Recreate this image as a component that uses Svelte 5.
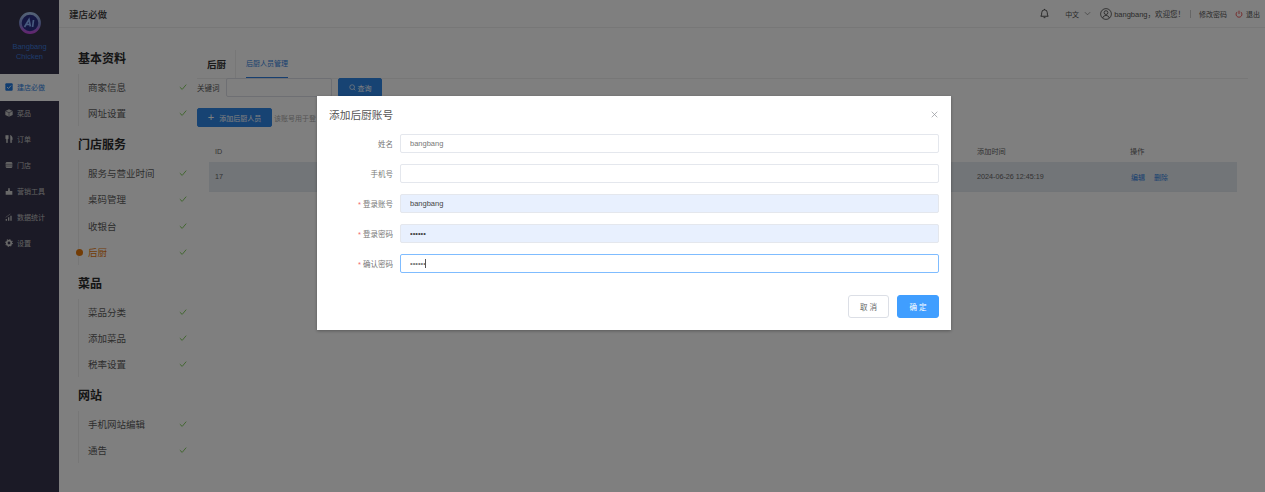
<script>
  const nav = [
    { label: '建店必做', icon: 'check', active: true },
    { label: '菜品', icon: 'dish' },
    { label: '订单', icon: 'fork' },
    { label: '门店', icon: 'store' },
    { label: '营销工具', icon: 'crown' },
    { label: '数据统计', icon: 'chart' },
    { label: '设置', icon: 'gear' }
  ];

  const groups = [
    { title: '基本资料', items: ['商家信息', '网址设置'] },
    { title: '门店服务', items: ['服务与营业时间', '桌码管理', '收银台', '后厨'] },
    { title: '菜品', items: ['菜品分类', '添加菜品', '税率设置'] },
    { title: '网站', items: ['手机网站编辑', '通告'] }
  ];

  const fields = [
    { label: '姓名', value: 'bangbang', type: 'text' },
    { label: '手机号', value: '', type: 'text' },
    { label: '登录账号', value: 'bangbang', type: 'text', required: true, filled: true },
    { label: '登录密码', value: '123456', type: 'password', required: true, filled: true },
    { label: '确认密码', value: '123456', type: 'password', required: true, focused: true }
  ];
</script>

<div class="page">
  <aside class="sidebar">
    <div class="brand">
      <svg class="logo" viewBox="0 0 22 22" width="22" height="22">
        <defs>
          <linearGradient id="ring" x1="0" y1="0" x2="0" y2="1">
            <stop offset="0" stop-color="#a9c4ee" />
            <stop offset="0.55" stop-color="#7f8fd8" />
            <stop offset="1" stop-color="#c24ee0" />
          </linearGradient>
        </defs>
        <circle cx="11" cy="11" r="9.6" fill="#2b2f86" stroke="url(#ring)" stroke-width="2.6" />
        <path d="M5.5 15 L10 7.5 L11.4 14.5 M7.5 12.5 H11 M14.5 8 L13.6 15" fill="none" stroke="#8fb4ff" stroke-width="1.7" />
      </svg>
      <div class="brand-name">Bangbang<br />Chicken</div>
    </div>
    {#each nav as item}
      <div class="nav-item" class:active={item.active}>
        <svg class="nav-icon" viewBox="0 0 12 12" width="8" height="8">
          {#if item.icon === 'check'}
            <rect x="0.5" y="0.5" width="11" height="11" rx="1.5" fill="#1f78e0" />
            <path d="M3 6 L5.2 8.2 L9.2 3.8" fill="none" stroke="#fff" stroke-width="1.3" />
          {:else if item.icon === 'dish'}
            <path d="M6 0.5 L11.5 3 V9 L6 11.5 L0.5 9 V3 Z" fill="#c6c6c6" />
            <path d="M0.5 3 L6 5.5 L11.5 3 M6 5.5 V11.5" fill="none" stroke="#36344c" stroke-width="0.8" />
          {:else if item.icon === 'fork'}
            <path d="M1 0.5 V5 Q1 6.5 2.2 6.5 V11.5 H3.8 V6.5 Q5 6.5 5 5 V0.5 M3 0.5 V5 M8 0.5 Q11.5 1.5 11 7 H10 V11.5 H8.4 Z" fill="#d0d0d0" stroke="#d0d0d0" stroke-width="0.6" />
          {:else if item.icon === 'store'}
            <rect x="1" y="1.5" width="10" height="9" rx="2" fill="#c6c6c6" />
            <path d="M1 5 H11 M1 7.6 H11" stroke="#36344c" stroke-width="0.7" />
          {:else if item.icon === 'crown'}
            <path d="M1 6 H4.5 L5.2 1.5 H6.8 L7.5 6 H11 V11.5 H1 Z" fill="#d0d0d0" />
          {:else if item.icon === 'chart'}
            <path d="M1 11.5 V9 H3 V11.5 Z M4.5 11.5 V6.5 H6.5 V11.5 Z M8 11.5 V4 H10 V11.5 Z" fill="#c6c6c6" />
            <path d="M1 6.5 L8 1.5" stroke="#c6c6c6" stroke-width="0.8" />
          {:else}
            <circle cx="6" cy="6" r="3.4" fill="none" stroke="#d0d0d0" stroke-width="2.6" />
            <circle cx="6" cy="6" r="5" fill="none" stroke="#d0d0d0" stroke-width="1.6" stroke-dasharray="1.8 2.1" />
          {/if}
        </svg>
        <span>{item.label}</span>
      </div>
    {/each}
  </aside>

  <div class="body">
    <header class="topbar">
      <div class="crumb">建店必做</div>
      <div class="top-right">
        <svg viewBox="0 0 12 12" width="11" height="11" class="bell">
          <path d="M2 9 Q3 8 3 5 Q3 2 6 2 Q9 2 9 5 Q9 8 10 9 Z M6 1 V2 M5 10.5 H7" fill="none" stroke="#333" stroke-width="0.9" />
        </svg>
        <span class="lang">中文</span>
        <svg viewBox="0 0 8 8" width="7" height="7" class="caret-down">
          <path d="M1 2.5 L4 5.5 L7 2.5" fill="none" stroke="#777" stroke-width="0.8" />
        </svg>
        <svg viewBox="0 0 12 12" width="12" height="12" class="user">
          <circle cx="6" cy="6" r="5.4" fill="none" stroke="#444" stroke-width="0.8" />
          <circle cx="6" cy="4.6" r="1.9" fill="none" stroke="#444" stroke-width="0.8" />
          <path d="M2.6 10 Q3.4 7.4 6 7.4 Q8.6 7.4 9.4 10" fill="none" stroke="#444" stroke-width="0.8" />
        </svg>
        <span class="welcome">bangbang，欢迎您！</span>
        <span class="sep"></span>
        <span class="pwd">修改密码</span>
        <svg viewBox="0 0 12 12" width="8" height="8" class="power">
          <path d="M3.5 2.8 A4.4 4.4 0 1 0 8.5 2.8 M6 1 V6" fill="none" stroke="#e63535" stroke-width="1.2" />
        </svg>
        <span class="quit">退出</span>
      </div>
    </header>

    <div class="content">
      <nav class="steps">
        {#each groups as group}
          <section class="group">
            <h3>{group.title}</h3>
            <ul>
              {#each group.items as item}
                <li class:current={item === '后厨'}>
                  <span>{item}</span>
                  <svg viewBox="0 0 10 10" width="8" height="8">
                    <path d="M1 5.2 L4 8 L9 2" fill="none" stroke="#67c23a" stroke-width="1" />
                  </svg>
                </li>
              {/each}
            </ul>
          </section>
        {/each}
      </nav>

      <main class="panel">
        <div class="tabs">
          <div class="tab-title">后厨</div>
          <div class="tab-active">后厨人员管理</div>
        </div>
        <div class="filter">
          <span class="filter-label">关键词</span>
          <div class="filter-input"></div>
          <button class="search">
            <svg viewBox="0 0 10 10" width="7" height="7">
              <circle cx="4.5" cy="4.5" r="3.4" fill="none" stroke="#fff" stroke-width="1" />
              <path d="M7 7 L9 9" stroke="#fff" stroke-width="1" />
            </svg>
            查询
          </button>
        </div>
        <div class="add-row">
          <button class="add"><span class="plus">+</span>添加后厨人员</button>
          <span class="hint">该账号用于登</span>
        </div>
        <div class="table">
          <div class="thead">
            <span class="id">ID</span>
            <span>添加时间</span>
            <span>操作</span>
          </div>
          <div class="trow">
            <span class="id">17</span>
            <span>2024-06-26 12:45:19</span>
            <span class="ops"><em>编辑</em><em>删除</em></span>
          </div>
        </div>
      </main>
    </div>
  </div>

  <div class="overlay">
    <div class="dialog">
      <div class="dialog-head">
        <span class="dialog-title">添加后厨账号</span>
        <svg viewBox="0 0 10 10" width="7" height="7">
          <path d="M1 1 L9 9 M9 1 L1 9" stroke="#909399" stroke-width="1" />
        </svg>
      </div>
      <form class="form">
        {#each fields as f}
          <div class="form-row">
            <label>
              {#if f.required}<i>*</i>{/if}{f.label}
            </label>
            <div class="field" class:filled={f.filled} class:focused={f.focused}>
              <input type={f.type} value={f.value} readonly />
              {#if f.focused}<span class="cursor"></span>{/if}
            </div>
          </div>
        {/each}
      </form>
      <div class="dialog-foot">
        <button class="cancel">取 消</button>
        <button class="ok">确 定</button>
      </div>
    </div>
  </div>
</div>

<style>
  :global(body) {
    margin: 0;
    background: #fff;
  }

  .page {
    position: relative;
    display: flex;
    height: 492px;
    overflow: hidden;
    font-family: "Liberation Sans", "Noto Sans CJK SC", sans-serif;
    color: #333;
  }

  .sidebar {
    width: 59px;
    flex: none;
    background: #36344c;
  }

  .brand {
    height: 74px;
    box-sizing: border-box;
    padding-top: 12px;
    text-align: center;
  }

  .logo {
    display: block;
    margin: 0 auto 8px;
  }

  .brand-name {
    font-size: 7.5px;
    line-height: 10px;
    color: #3d7ad8;
  }

  .nav-item {
    height: 26px;
    box-sizing: border-box;
    padding: 0 0 2px 5px;
    display: flex;
    align-items: center;
    gap: 4px;
    font-size: 7px;
    color: #c4c4c4;
  }

  .nav-item.active {
    height: 27px;
    padding-bottom: 1px;
    background: #fff;
    color: #2f7fe0;
  }

  .body {
    flex: 1;
    min-width: 0;
    display: flex;
    flex-direction: column;
  }

  .topbar {
    height: 27px;
    flex: none;
    display: flex;
    align-items: center;
    justify-content: space-between;
    padding: 0 5px 0 10px;
    border-bottom: 1px solid #eee;
  }

  .crumb {
    font-size: 9.5px;
    font-weight: 500;
    color: #333;
  }

  .top-right {
    display: flex;
    align-items: center;
    font-size: 7px;
    color: #555;
  }

  .lang {
    margin-left: 15px;
  }

  .caret-down {
    margin-left: 5px;
  }

  .user {
    margin-left: 9px;
  }

  .welcome {
    margin-left: 2px;
    font-size: 7.5px;
  }

  .sep {
    width: 1px;
    height: 8px;
    background: #ccc;
    margin: 0 8px 0 5px;
  }

  .power {
    margin-left: 8px;
  }

  .quit {
    margin-left: 3px;
  }

  .content {
    flex: 1;
    display: flex;
    padding-left: 19px;
  }

  .steps {
    width: 119px;
    flex: none;
    padding-top: 18px;
  }

  .group {
    margin-bottom: 6.3px;
  }

  h3 {
    margin: 0 0 4px;
    height: 24px;
    line-height: 27px;
    font-size: 12px;
    font-weight: 700;
    color: #2a2a2a;
  }

  ul {
    list-style: none;
    margin: 0;
    padding: 0;
    border-left: 1px solid #eee;
  }

  li {
    position: relative;
    height: 26.05px;
    display: flex;
    align-items: center;
    justify-content: space-between;
    padding: 0 3px 0 9px;
    font-size: 9.5px;
    color: #5c5c5c;
    width: 99px;
  }

  li.current {
    color: #e6780a;
  }

  li.current::before {
    content: "";
    position: absolute;
    left: -3px;
    top: 10px;
    width: 7px;
    height: 7px;
    border-radius: 50%;
    background: #e6780a;
  }

  .panel {
    flex: 1;
    min-width: 0;
    padding: 22px 17px 0 0;
  }

  .tabs {
    height: 28px;
    display: flex;
    border-bottom: 1px solid #eee;
  }

  .tab-title {
    width: 28px;
    padding-left: 10px;
    line-height: 29px;
    font-size: 9.5px;
    font-weight: 700;
    color: #333;
    border-right: 1px solid #eee;
  }

  .tab-active {
    margin-left: 10px;
    height: 27px;
    line-height: 28px;
    font-size: 7px;
    color: #2f7fe0;
    border-bottom: 1px solid #2f7fe0;
  }

  .filter {
    display: flex;
    align-items: center;
    height: 19px;
    margin-top: -1px;
  }

  .filter-label {
    width: 29px;
    font-size: 7.5px;
    color: #555;
  }

  .filter-input {
    width: 104px;
    height: 17px;
    border: 1px solid #dcdfe6;
    border-radius: 2px;
    background: #fff;
  }

  .search {
    margin-left: 6px;
    width: 44px;
    height: 19px;
  }

  button {
    border: 1px solid #2f86e6;
    border-radius: 2px;
    background: #2f86e6;
    color: #fff;
    font: inherit;
    font-size: 7px;
    padding: 0;
  }

  .add-row {
    display: flex;
    align-items: center;
    margin-top: 11px;
  }

  .add {
    width: 75px;
    height: 19px;
  }

  .plus {
    font-size: 11px;
    line-height: 7px;
    margin-right: 5px;
  }

  .hint {
    margin-left: 2px;
    font-size: 7px;
    color: #aaa;
  }

  .table {
    margin: 13px 11px 0 12px;
    font-size: 7.2px;
    color: #666;
  }

  .thead,
  .trow {
    display: grid;
    grid-template-columns: 768px 153px 1fr;
    align-items: center;
  }

  .thead {
    height: 22px;
  }

  .trow {
    height: 29px;
    background: #e4eaf0;
    border-bottom: 1px solid #e2e8ee;
  }

  .id {
    padding-left: 6px;
  }

  .ops em {
    font-style: normal;
    font-size: 7px;
    color: #2f7fe0;
    margin: 0 9px 0 1px;
  }

  .ops em + em {
    margin-left: 0;
  }

  .overlay {
    position: absolute;
    inset: 0;
    background: rgba(0, 0, 0, 0.5);
    padding: 96px 314px 0 317px;
  }

  .dialog {
    width: 634px;
    height: 234px;
    box-sizing: border-box;
    background: #fff;
    box-shadow: 0 1px 3px rgba(0, 0, 0, 0.3);
    padding: 0 12px;
  }

  .dialog-head {
    height: 36px;
    margin-bottom: 2px;
    display: flex;
    align-items: center;
    justify-content: space-between;
    padding-right: 1px;
  }

  .dialog-title {
    font-size: 10.7px;
    color: #555;
  }

  .form {
    display: flex;
    flex-direction: column;
    gap: 11px;
  }

  .form-row {
    display: flex;
    align-items: center;
  }

  label {
    width: 64px;
    flex: none;
    text-align: right;
    font-size: 7.5px;
    color: #777;
  }

  label i {
    font-style: normal;
    color: #f56c6c;
    margin-right: 2px;
  }

  .field {
    position: relative;
    flex: 1;
    margin-left: 7px;
    height: 19px;
    box-sizing: border-box;
    border: 1px solid #e4e7ed;
    border-radius: 2px;
    background: #fff;
  }

  .field.filled {
    background: #e8f0fe;
  }

  .field.focused {
    border-color: #7fbcff;
  }

  input {
    display: block;
    width: 100%;
    height: 100%;
    box-sizing: border-box;
    border: 0;
    outline: 0;
    background: transparent;
    padding: 0 9px;
    font: inherit;
    font-size: 7.5px;
    color: #777;
  }

  .filled input {
    color: #444;
  }

  .cursor {
    position: absolute;
    left: 24px;
    top: 4px;
    width: 1px;
    height: 9px;
    background: #555;
  }

  .dialog-foot {
    display: flex;
    justify-content: flex-end;
    gap: 8px;
    margin-top: 22px;
  }

  .dialog-foot button {
    width: 42px;
    height: 23px;
    font-size: 7.5px;
    border-radius: 3px;
  }

  .dialog-foot .cancel {
    width: 41px;
    background: #fff;
    border-color: #dcdfe6;
    color: #666;
  }

  .dialog-foot .ok {
    background: #409eff;
    border-color: #409eff;
  }
</style>
